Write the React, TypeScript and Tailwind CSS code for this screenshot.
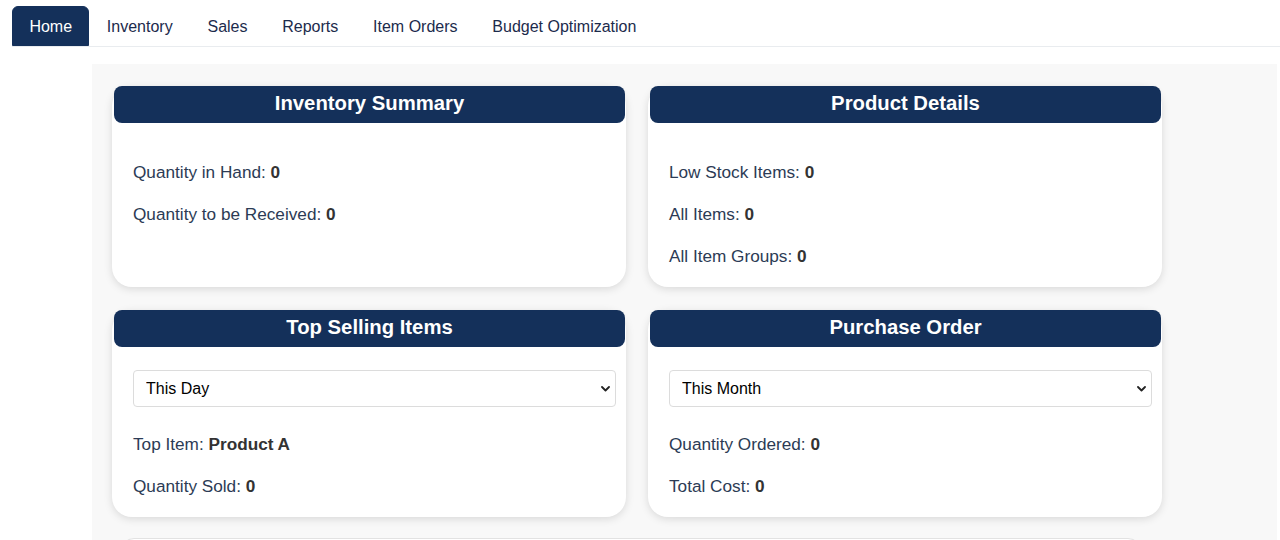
import React from "react";

const tabs = ["Home", "Inventory", "Sales", "Reports", "Item Orders", "Budget Optimization"];

function Chevron() {
    return (
        <svg className="pointer-events-none absolute right-[6px] top-1/2 -translate-y-1/2" width="9" height="6" viewBox="0 0 9 6" fill="none">
            <path d="M1 1l3.5 3.5L8 1" stroke="#222" strokeWidth="1.8" strokeLinecap="round" strokeLinejoin="round" />
        </svg>
    );
}

function Card({ title, children, top = "pt-9" }: { title: string; children: React.ReactNode; top?: string }) {
    return (
        <div className="bg-white rounded-[20px] shadow-[0_2px_8px_rgba(0,0,0,0.13)] flex flex-col">
            <div className="ml-[2px] mr-[1px] h-[37px] rounded-lg bg-[#14305a] flex items-center justify-center">
                <h2 className="text-white text-[20.3px] font-bold leading-none -mt-[3px]">{title}</h2>
            </div>
            <div className={`pl-[21px] pb-[18px] flex flex-col gap-4 ${top}`}>{children}</div>
        </div>
    );
}

function Stat({ label, value }: { label: string; value: string }) {
    return (
        <p className="text-[17.2px] leading-[26px] text-[#2c3b55]">
            {label}: <span className="font-bold text-[#333]">{value}</span>
        </p>
    );
}

function Select({ value }: { value: string }) {
    return (
        <div className="relative mb-2 w-[483px]">
            <select
                defaultValue={value}
                className="appearance-none w-full h-[37px] border border-[#dcdcdc] rounded-[4px] bg-white pl-3 text-[16px] text-black"
            >
                <option>{value}</option>
            </select>
            <Chevron />
        </div>
    );
}

export default function App() {
    return (
        <div className="min-h-[540px] bg-white font-['Liberation_Sans',Arial,sans-serif]">
            <nav className="pt-[6px] pl-3">
                <ul className="flex border-b border-[#e9ecef]">
                    {tabs.map((t, i) => (
                        <li key={t}>
                            <a
                                className={
                                    i === 0
                                        ? "block h-10 px-[16.4px] border border-[#14305a] rounded-t-md bg-[#14305a] text-white text-[16px] leading-[39px]"
                                        : "block h-10 px-[16.4px] border border-transparent text-[#1c2b4c] text-[16px] leading-[39px]"
                                }
                            >
                                {t}
                            </a>
                        </li>
                    ))}
                </ul>
            </nav>

            <main className="ml-[92px] mr-[3px] mt-[17px] bg-[#f8f8f8] pl-5 pt-[22px] pb-4">
                <div className="grid grid-cols-[514px_514px] gap-x-[22px] gap-y-[23px]">
                    <Card title="Inventory Summary">
                        <Stat label="Quantity in Hand" value="0" />
                        <Stat label="Quantity to be Received" value="0" />
                    </Card>
                    <Card title="Product Details">
                        <Stat label="Low Stock Items" value="0" />
                        <Stat label="All Items" value="0" />
                        <Stat label="All Item Groups" value="0" />
                    </Card>
                    <Card title="Top Selling Items" top="pt-[23px]">
                        <Select value="This Day" />
                        <Stat label="Top Item" value="Product A" />
                        <Stat label="Quantity Sold" value="0" />
                    </Card>
                    <Card title="Purchase Order" top="pt-[23px]">
                        <Select value="This Month" />
                        <Stat label="Quantity Ordered" value="0" />
                        <Stat label="Total Cost" value="0" />
                    </Card>
                </div>
                <div className="ml-2 mt-[21px] w-[1022px] h-[60px] bg-white border border-[#e2e2e2] rounded-[14px]" />
            </main>
        </div>
    );
}
